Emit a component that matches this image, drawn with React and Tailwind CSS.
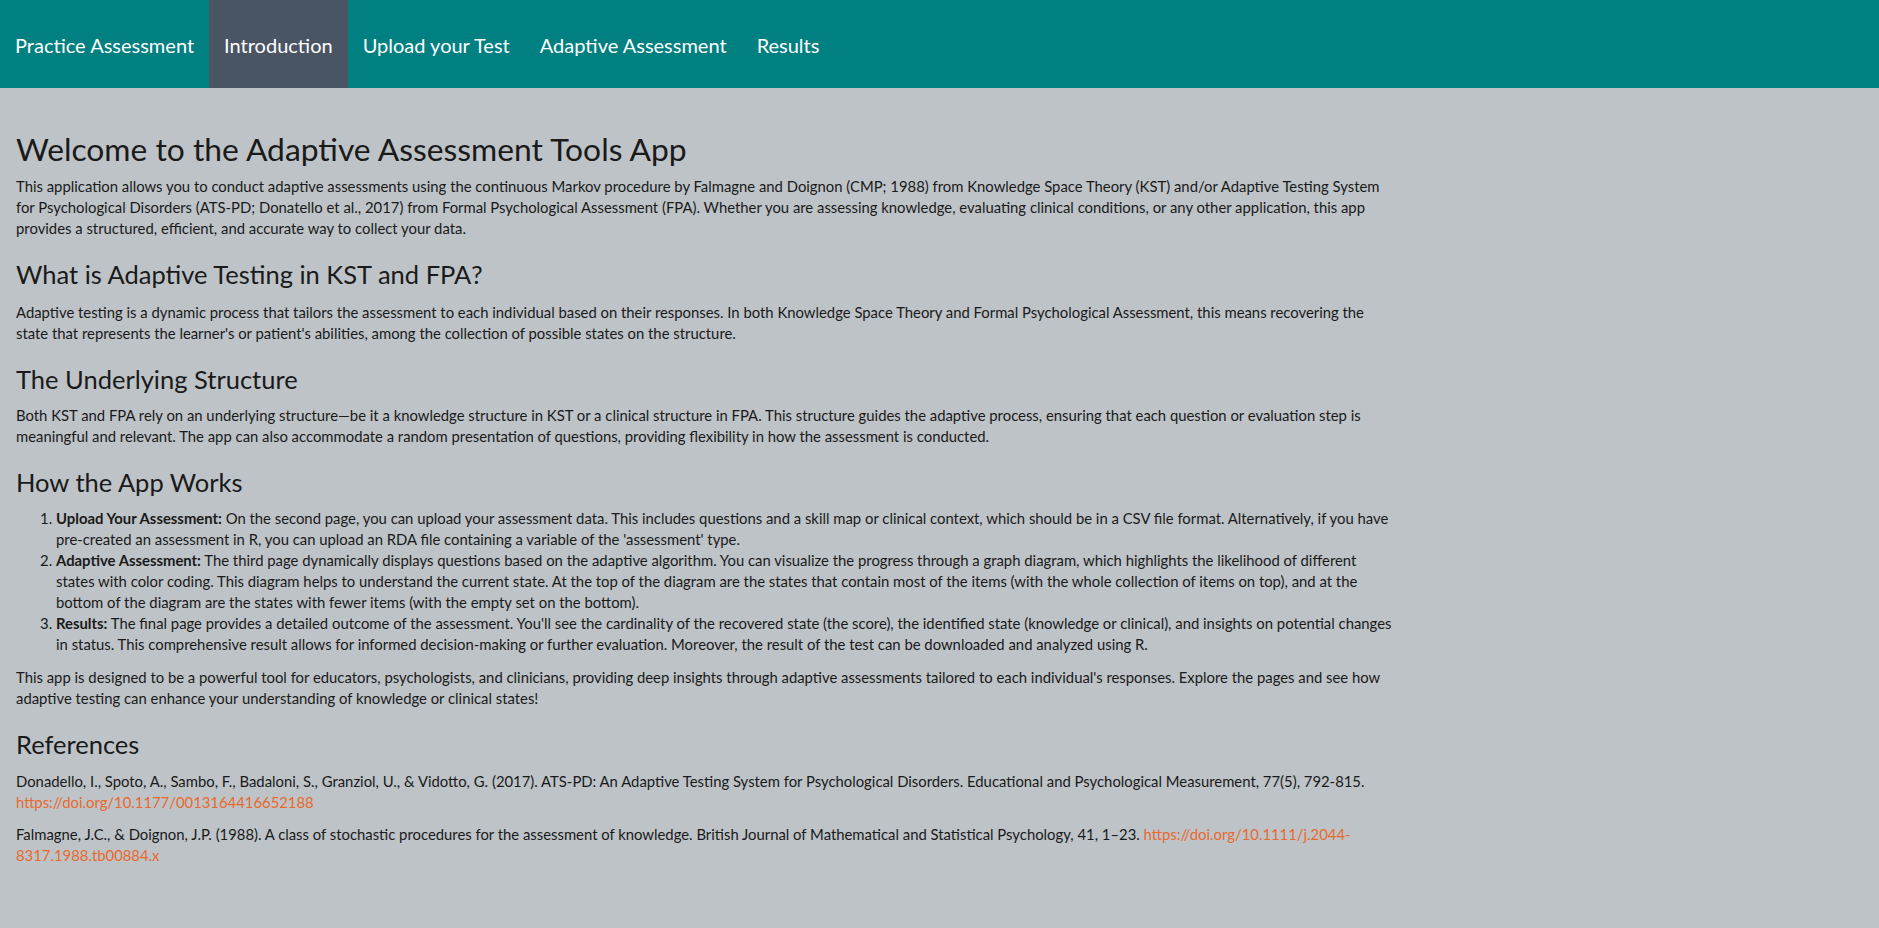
import React from 'react'

const tabs = ['Practice Assessment', 'Introduction', 'Upload your Test', 'Adaptive Assessment', 'Results']

export default function App() {
  const active = 'Introduction'

  return (
    <div className="min-h-screen bg-[#bdc3c7] text-[#1a1a1a]" style={{ fontFamily: 'Lato, "Noto Sans", sans-serif' }}>
      {/* Navbar */}
      <nav className="h-[88px] bg-[#008080] flex items-stretch">
        {tabs.map(t => (
          <div
            key={t}
            className={`flex items-center pt-[2px] px-[15px] text-[20px] text-white ${t === active ? 'bg-[#4a5563]' : ''}`}
          >
            {t}
          </div>
        ))}
      </nav>

      {/* Content */}
      <div className="w-[1394px] pl-4 pt-[41px] pb-10 text-[14.85px] leading-[21px]">
        <h1 className="text-[31.8px] leading-[40px] mb-[7px]">Welcome to the Adaptive Assessment Tools App</h1>
        <p className="mb-[10px]">
          This application allows you to conduct adaptive assessments using the continuous Markov procedure by Falmagne and Doignon (CMP; 1988) from Knowledge Space Theory (KST) and/or Adaptive Testing System for Psychological Disorders (ATS-PD; Donatello et al., 2017) from Formal Psychological Assessment (FPA). Whether you are assessing knowledge, evaluating clinical conditions, or any other application, this app provides a structured, efficient, and accurate way to collect your data.
        </p>

        <h3 className="text-[25.5px] leading-[31px] mt-[20px] mb-[12px]">What is Adaptive Testing in KST and FPA?</h3>
        <p className="mb-[10px]">
          Adaptive testing is a dynamic process that tailors the assessment to each individual based on their responses. In both Knowledge Space Theory and Formal Psychological Assessment, this means recovering the state that represents the learner's or patient's abilities, among the collection of possible states on the structure.
        </p>

        <h3 className="text-[25.5px] leading-[31px] mt-[20px] mb-[10px]">The Underlying Structure</h3>
        <p className="mb-[10px]">
          Both KST and FPA rely on an underlying structure—be it a knowledge structure in KST or a clinical structure in FPA. This structure guides the adaptive process, ensuring that each question or evaluation step is meaningful and relevant. The app can also accommodate a random presentation of questions, providing flexibility in how the assessment is conducted.
        </p>

        <h3 className="text-[25.5px] leading-[31px] mt-[20px] mb-[10px]">How the App Works</h3>
        <ol className="list-decimal pl-[40px] mb-[12px]">
          <li>
            <strong>Upload Your Assessment:</strong> On the second page, you can upload your assessment data. This includes questions and a skill map or clinical context, which should be in a CSV file format. Alternatively, if you have pre-created an assessment in R, you can upload an RDA file containing a variable of the 'assessment' type.
          </li>
          <li>
            <strong>Adaptive Assessment:</strong> The third page dynamically displays questions based on the adaptive algorithm. You can visualize the progress through a graph diagram, which highlights the likelihood of different states with color coding. This diagram helps to understand the current state. At the top of the diagram are the states that contain most of the items (with the whole collection of items on top), and at the bottom of the diagram are the states with fewer items (with the empty set on the bottom).
          </li>
          <li>
            <strong>Results:</strong> The final page provides a detailed outcome of the assessment. You'll see the cardinality of the recovered state (the score), the identified state (knowledge or clinical), and insights on potential changes in status. This comprehensive result allows for informed decision-making or further evaluation. Moreover, the result of the test can be downloaded and analyzed using R.
          </li>
        </ol>
        <p className="mb-[10px]">
          This app is designed to be a powerful tool for educators, psychologists, and clinicians, providing deep insights through adaptive assessments tailored to each individual's responses. Explore the pages and see how adaptive testing can enhance your understanding of knowledge or clinical states!
        </p>

        <h3 className="text-[25.5px] leading-[31px] mt-[20px] mb-[11px]">References</h3>
        <p className="mb-[11px]">
          Donadello, I., Spoto, A., Sambo, F., Badaloni, S., Granziol, U., &amp; Vidotto, G. (2017). ATS-PD: An Adaptive Testing System for Psychological Disorders. Educational and Psychological Measurement, 77(5), 792-815.{' '}
          <a className="text-[#e8692d]">https://doi.org/10.1177/0013164416652188</a>
        </p>
        <p className="mb-[10px]">
          Falmagne, J.C., &amp; Doignon, J.P. (1988). A class of stochastic procedures for the assessment of knowledge. British Journal of Mathematical and Statistical Psychology, 41, 1–23.{' '}
          <a className="text-[#e8692d]">https://doi.org/10.1111/j.2044-8317.1988.tb00884.x</a>
        </p>
      </div>
    </div>
  )
}
